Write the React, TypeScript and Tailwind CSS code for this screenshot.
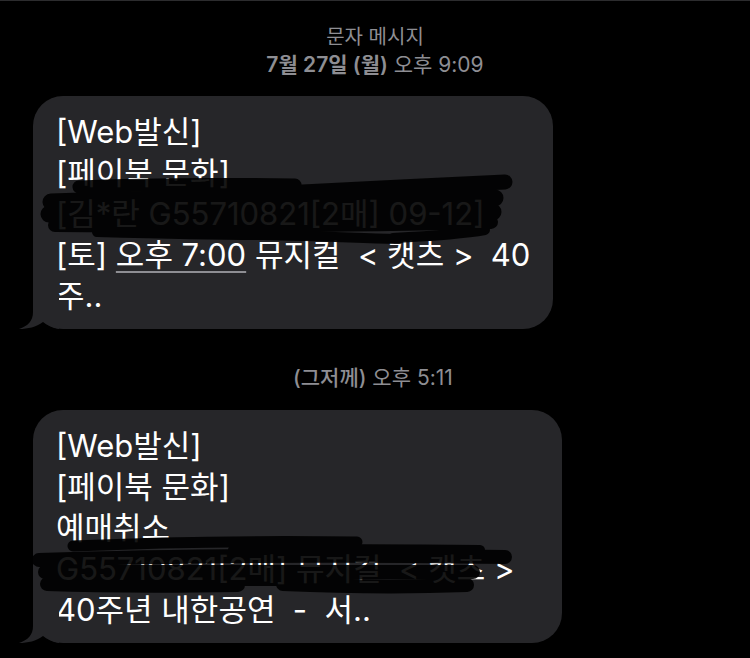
const bubbleFont = { fontFamily: "Inter, 'Noto Sans CJK KR', sans-serif" };

function Tail() {
  return (
    <svg
      className="absolute left-[-14px] bottom-0"
      width="40"
      height="35"
      viewBox="0 0 40 35"
    >
      <path
        d="M14 0 L14 18 C14 27 9 32 0 35 C9 35 17 33 24 28 C28 31 33 34 40 35 L40 0 Z"
        fill="#262629"
      />
    </svg>
  );
}

function Scribble({ strokes }: { strokes: { d: string; w: number }[] }) {
  return (
    <svg className="absolute inset-0 pointer-events-none" width="100%" height="100%">
      <g opacity="0.9">
        {strokes.map((s, i) => (
          <path
            key={i}
            d={s.d}
            fill="none"
            stroke="#000"
            strokeWidth={s.w}
            strokeLinecap="round"
            strokeLinejoin="round"
          />
        ))}
      </g>
    </svg>
  );
}

// coordinates relative to each bubble's top-left
const scribbleOne = [
  { d: 'M46 91 C110 88 190 88 262 89', w: 13 },
  { d: 'M250 97 C320 94 400 89 472 86', w: 15 },
  { d: 'M18 106 C140 102 300 101 462 102', w: 17 },
  { d: 'M16 118 C150 115 300 115 460 116', w: 17 },
  { d: 'M22 129 C160 130 300 130 458 126', w: 14 },
  { d: 'M64 136 C140 138 200 139 230 139 C280 140 330 142 366 143', w: 10 },
  { d: 'M360 142 C400 140 430 138 452 134', w: 10 },
];

const scribbleTwo = [
  { d: 'M40 136 C130 132 240 131 324 132', w: 11 },
  { d: 'M200 140 C280 139 380 139 447 140', w: 10 },
  { d: 'M6 150 C160 145 320 145 472 147', w: 14 },
  { d: 'M12 162 C160 161 300 161 440 162', w: 14 },
  { d: 'M14 174 C70 176 140 176 205 175', w: 14 },
  { d: 'M205 172 C230 172 250 172 262 172', w: 8 },
  { d: 'M250 174 C320 177 380 177 434 175', w: 14 },
];

export default function App() {
  return (
    <div className="w-[750px] h-[658px] overflow-hidden bg-black border-t border-[#2c2c2e]">
      <div
        className="pt-[22px] text-center text-[20px] leading-[28px] text-[#8e8e93]"
        style={bubbleFont}
      >
        <div>문자 메시지</div>
        <div className="text-[21px]">
          <span className="font-semibold">7월 27일 (월)</span> 오후 9:09
        </div>
      </div>

      <div
        className="relative mt-[17px] ml-[33px] w-[520px] h-[233px] rounded-[30px] bg-[#262629] pl-[23px] pt-[15px] text-[31px] leading-[41px] text-white"
        style={bubbleFont}
      >
        <div className="whitespace-pre">[Web발신]</div>
        <div className="whitespace-pre">[페이북 문화]</div>
        <div className="whitespace-pre">[김*란 G55710821[2매] 09-12]</div>
        <div className="whitespace-pre">
          [토]{' '}
          <span className="underline decoration-[#8e8e93] decoration-[1.5px] underline-offset-[5px]">
            오후 7:00
          </span>{' '}
          뮤지컬  &lt; 캣츠 &gt;  40
        </div>
        <div className="whitespace-pre">주..</div>
        <Scribble strokes={scribbleOne} />
        <Tail />
      </div>

      <div
        className="mt-[35px] pl-[293px] text-[21px] leading-[28px] text-[#8e8e93]"
        style={bubbleFont}
      >
        <span className="font-medium">(그저께)</span> 오후 5:11
      </div>

      <div
        className="relative mt-[18px] ml-[33px] w-[529px] h-[233px] rounded-[30px] bg-[#262629] pl-[23px] pt-[15px] text-[31px] leading-[41px] text-white"
        style={bubbleFont}
      >
        <div className="whitespace-pre">[Web발신]</div>
        <div className="whitespace-pre">[페이북 문화]</div>
        <div className="whitespace-pre">예매취소</div>
        <div className="whitespace-pre">G55710821[2매] 뮤지컬  &lt; 캣츠 &gt;</div>
        <div className="whitespace-pre">40주년 내한공연  -  서..</div>
        <Scribble strokes={scribbleTwo} />
        <Tail />
      </div>
    </div>
  );
}
